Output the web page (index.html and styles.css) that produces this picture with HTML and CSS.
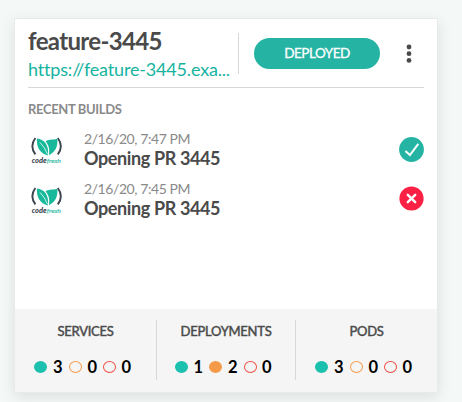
FILE: index.html
```html
<!DOCTYPE html>
<html lang="en">
<head>
<meta charset="utf-8">
<title>feature-3445</title>
<link rel="stylesheet" href="styles.css">
</head>
<body>
<main class="card">
  <header class="header">
    <div class="heading">
      <h1 class="title">feature-3445</h1>
      <a class="link">https://feature-3445.exa...</a>
    </div>
    <span class="status">DEPLOYED</span>
    <svg class="menu" viewBox="0 0 6 20"><circle cx="3" cy="3" r="2.4"/><circle cx="3" cy="9.7" r="2.4"/><circle cx="3" cy="16.4" r="2.4"/></svg>
  </header>
  <section class="builds">
    <h2 class="section-title">RECENT BUILDS</h2>
    <div class="build">
      <svg class="logo" viewBox="0 0 33 28">
        <path d="M5.4 1Q-.7 9.2 5.4 17.4M27.8 1Q33.9 9.2 27.8 17.4" fill="none" stroke="#3d4650" stroke-width="1.9"/>
        <path d="M7 1.6C14 2.4 19 7.5 18 18.4C10 17 6.2 10 7 1.6Z" fill="#18b99b"/>
        <path d="M27.4 1.8C22 3.2 17.5 2.2 15.6 4.4C18.8 7.8 19.8 12 19 18.2C25.6 15 27.9 9.5 27.4 1.8Z" fill="#18b99b"/>
        <path d="M10 5.4Q15 10.5 17.6 17.4" fill="none" stroke="#fff" stroke-width=".8"/>
        <text class="logo-code" x="1.8" y="26" textLength="14.8" lengthAdjust="spacingAndGlyphs">code</text>
        <text class="logo-fresh" x="16.8" y="26" textLength="14.2" lengthAdjust="spacingAndGlyphs">fresh</text>
      </svg>
      <div class="info"><div class="date">2/16/20, 7:47 PM</div><div class="name">Opening PR 3445</div></div>
      <svg class="result" viewBox="0 0 25 25"><circle cx="12.5" cy="12.5" r="12.4" fill="#25b4a4"/><path d="M6.4 14.1L10.9 18L19.3 6.8" fill="none" stroke="#fff" stroke-width="2"/></svg>
    </div>
    <div class="build">
      <svg class="logo" viewBox="0 0 33 28">
        <path d="M5.4 1Q-.7 9.2 5.4 17.4M27.8 1Q33.9 9.2 27.8 17.4" fill="none" stroke="#3d4650" stroke-width="1.9"/>
        <path d="M7 1.6C14 2.4 19 7.5 18 18.4C10 17 6.2 10 7 1.6Z" fill="#18b99b"/>
        <path d="M27.4 1.8C22 3.2 17.5 2.2 15.6 4.4C18.8 7.8 19.8 12 19 18.2C25.6 15 27.9 9.5 27.4 1.8Z" fill="#18b99b"/>
        <path d="M10 5.4Q15 10.5 17.6 17.4" fill="none" stroke="#fff" stroke-width=".8"/>
        <text class="logo-code" x="1.8" y="26" textLength="14.8" lengthAdjust="spacingAndGlyphs">code</text>
        <text class="logo-fresh" x="16.8" y="26" textLength="14.2" lengthAdjust="spacingAndGlyphs">fresh</text>
      </svg>
      <div class="info"><div class="date">2/16/20, 7:45 PM</div><div class="name">Opening PR 3445</div></div>
      <svg class="result failed" viewBox="0 0 25 25"><circle cx="12.5" cy="12.5" r="12.1" fill="#fb2145"/><path d="M8.8 8.8L16.2 16.2M16.2 8.8L8.8 16.2" fill="none" stroke="#fff" stroke-width="2.4" stroke-linecap="round"/></svg>
    </div>
  </section>
  <footer class="footer">
    <div class="stat"><h3 class="label">SERVICES</h3><div class="counts"><i class="dot ok"></i><b>3</b><i class="dot warn-empty"></i><b>0</b><i class="dot err-empty"></i><b>0</b></div></div>
    <div class="stat"><h3 class="label">DEPLOYMENTS</h3><div class="counts"><i class="dot ok"></i><b>1</b><i class="dot warn"></i><b>2</b><i class="dot err-empty"></i><b>0</b></div></div>
    <div class="stat"><h3 class="label">PODS</h3><div class="counts"><i class="dot ok"></i><b>3</b><i class="dot warn-empty"></i><b>0</b><i class="dot err-empty"></i><b>0</b></div></div>
  </footer>
</main>
</body>
</html>
```
FILE: styles.css
```css
* { box-sizing: border-box; }
body {
  margin: 0;
  height: 402px;
  padding: 18px 24px 9px 14px;
  background: #f4f8f7;
  font-family: Lato, "Liberation Sans", sans-serif;
  color: #4a4a4a;
  overflow: hidden;
}
h1, h2, h3 { margin: 0; }
.card {
  display: flex;
  flex-direction: column;
  width: 424px;
  height: 375px;
  background: #fff;
  border: 1px solid #e9ebeb;
  box-shadow: 0 4px 14px rgba(0, 30, 25, .1);
}
.header {
  display: flex;
  height: 69px;
  margin: 0 13px;
  border-bottom: 1px solid #d8d8d8;
}
.heading {
  width: 211px;
  height: 41px;
  margin-top: 14px;
  border-right: 1px solid #d8d8d8;
  white-space: nowrap;
}
.title {
  margin-top: -7px;
  font-size: 24px;
  line-height: 30px;
  font-weight: 700;
  letter-spacing: -.65px;
}
.link {
  display: block;
  font-size: 18px;
  line-height: 26px;
  letter-spacing: -.17px;
  color: #16b3a0;
}
.status {
  width: 126px;
  height: 31px;
  margin: 19px 0 0 15px;
  border-radius: 16px;
  background: #25b4a4;
  color: #fff;
  font-size: 13.5px;
  line-height: 31px;
  text-align: center;
  -webkit-text-stroke: .3px #fff;
  letter-spacing: -.5px;
}
.menu { width: 6px; height: 20px; margin: 25px 0 0 26px; fill: #4a4a4a; }
.builds { flex: 1; padding: 12px 13px 0; }
.section-title {
  height: 19px;
  font-size: 13px;
  line-height: 19px;
  color: #8a8a8a;
  letter-spacing: -.35px;
}
.build { display: flex; height: 50px; }
.section-title + .build { margin-top: 11px; }
.logo { width: 33px; height: 28px; margin: 7px 0 0 2px; }
.logo-code, .logo-fresh { font-size: 6.5px; font-style: italic; }
.logo-code { fill: #3d4650; font-weight: 900; }
.logo-fresh { fill: #3cc0aa; stroke: #3cc0aa; stroke-width: .2px; }
.info { width: 315px; margin-left: 21px; }
.date { font-size: 14px; line-height: 18px; letter-spacing: -.42px; color: #8a8a8a; }
.name { font-size: 18px; line-height: 20px; font-weight: 700; letter-spacing: -.38px; }
.result { width: 25px; height: 25px; margin-top: 7px; }
.failed { margin-top: 6px; }
.footer {
  display: grid;
  grid-template-columns: 142px 139px 141px;
  height: 83px;
  padding: 11px 0 12px;
  background: #f5f5f5;
}
.stat { border-right: 1px solid #d8d8d8; }
.stat:last-child { border: 0; }
.label {
  font-size: 13px;
  line-height: 22px;
  font-weight: 400;
  -webkit-text-stroke: .45px #4a4a4a;
  text-align: center;
  letter-spacing: -.25px;
}
.counts {
  display: flex;
  align-items: center;
  justify-content: center;
  height: 24px;
  margin-top: 13px;
  padding-right: 6px;
}
.counts b { width: 21.5px; font-size: 16.5px; text-align: center; color: #000; }
.counts b:last-child { width: 15px; text-align: right; }
.dot { width: 13px; height: 12px; border-radius: 50%; }
.ok { background: #1bc0ae; }
.warn { background: #f59a48; }
.warn-empty { border: 1px solid #f59a48; }
.err-empty { border: 1px solid #ef4d43; }
```
